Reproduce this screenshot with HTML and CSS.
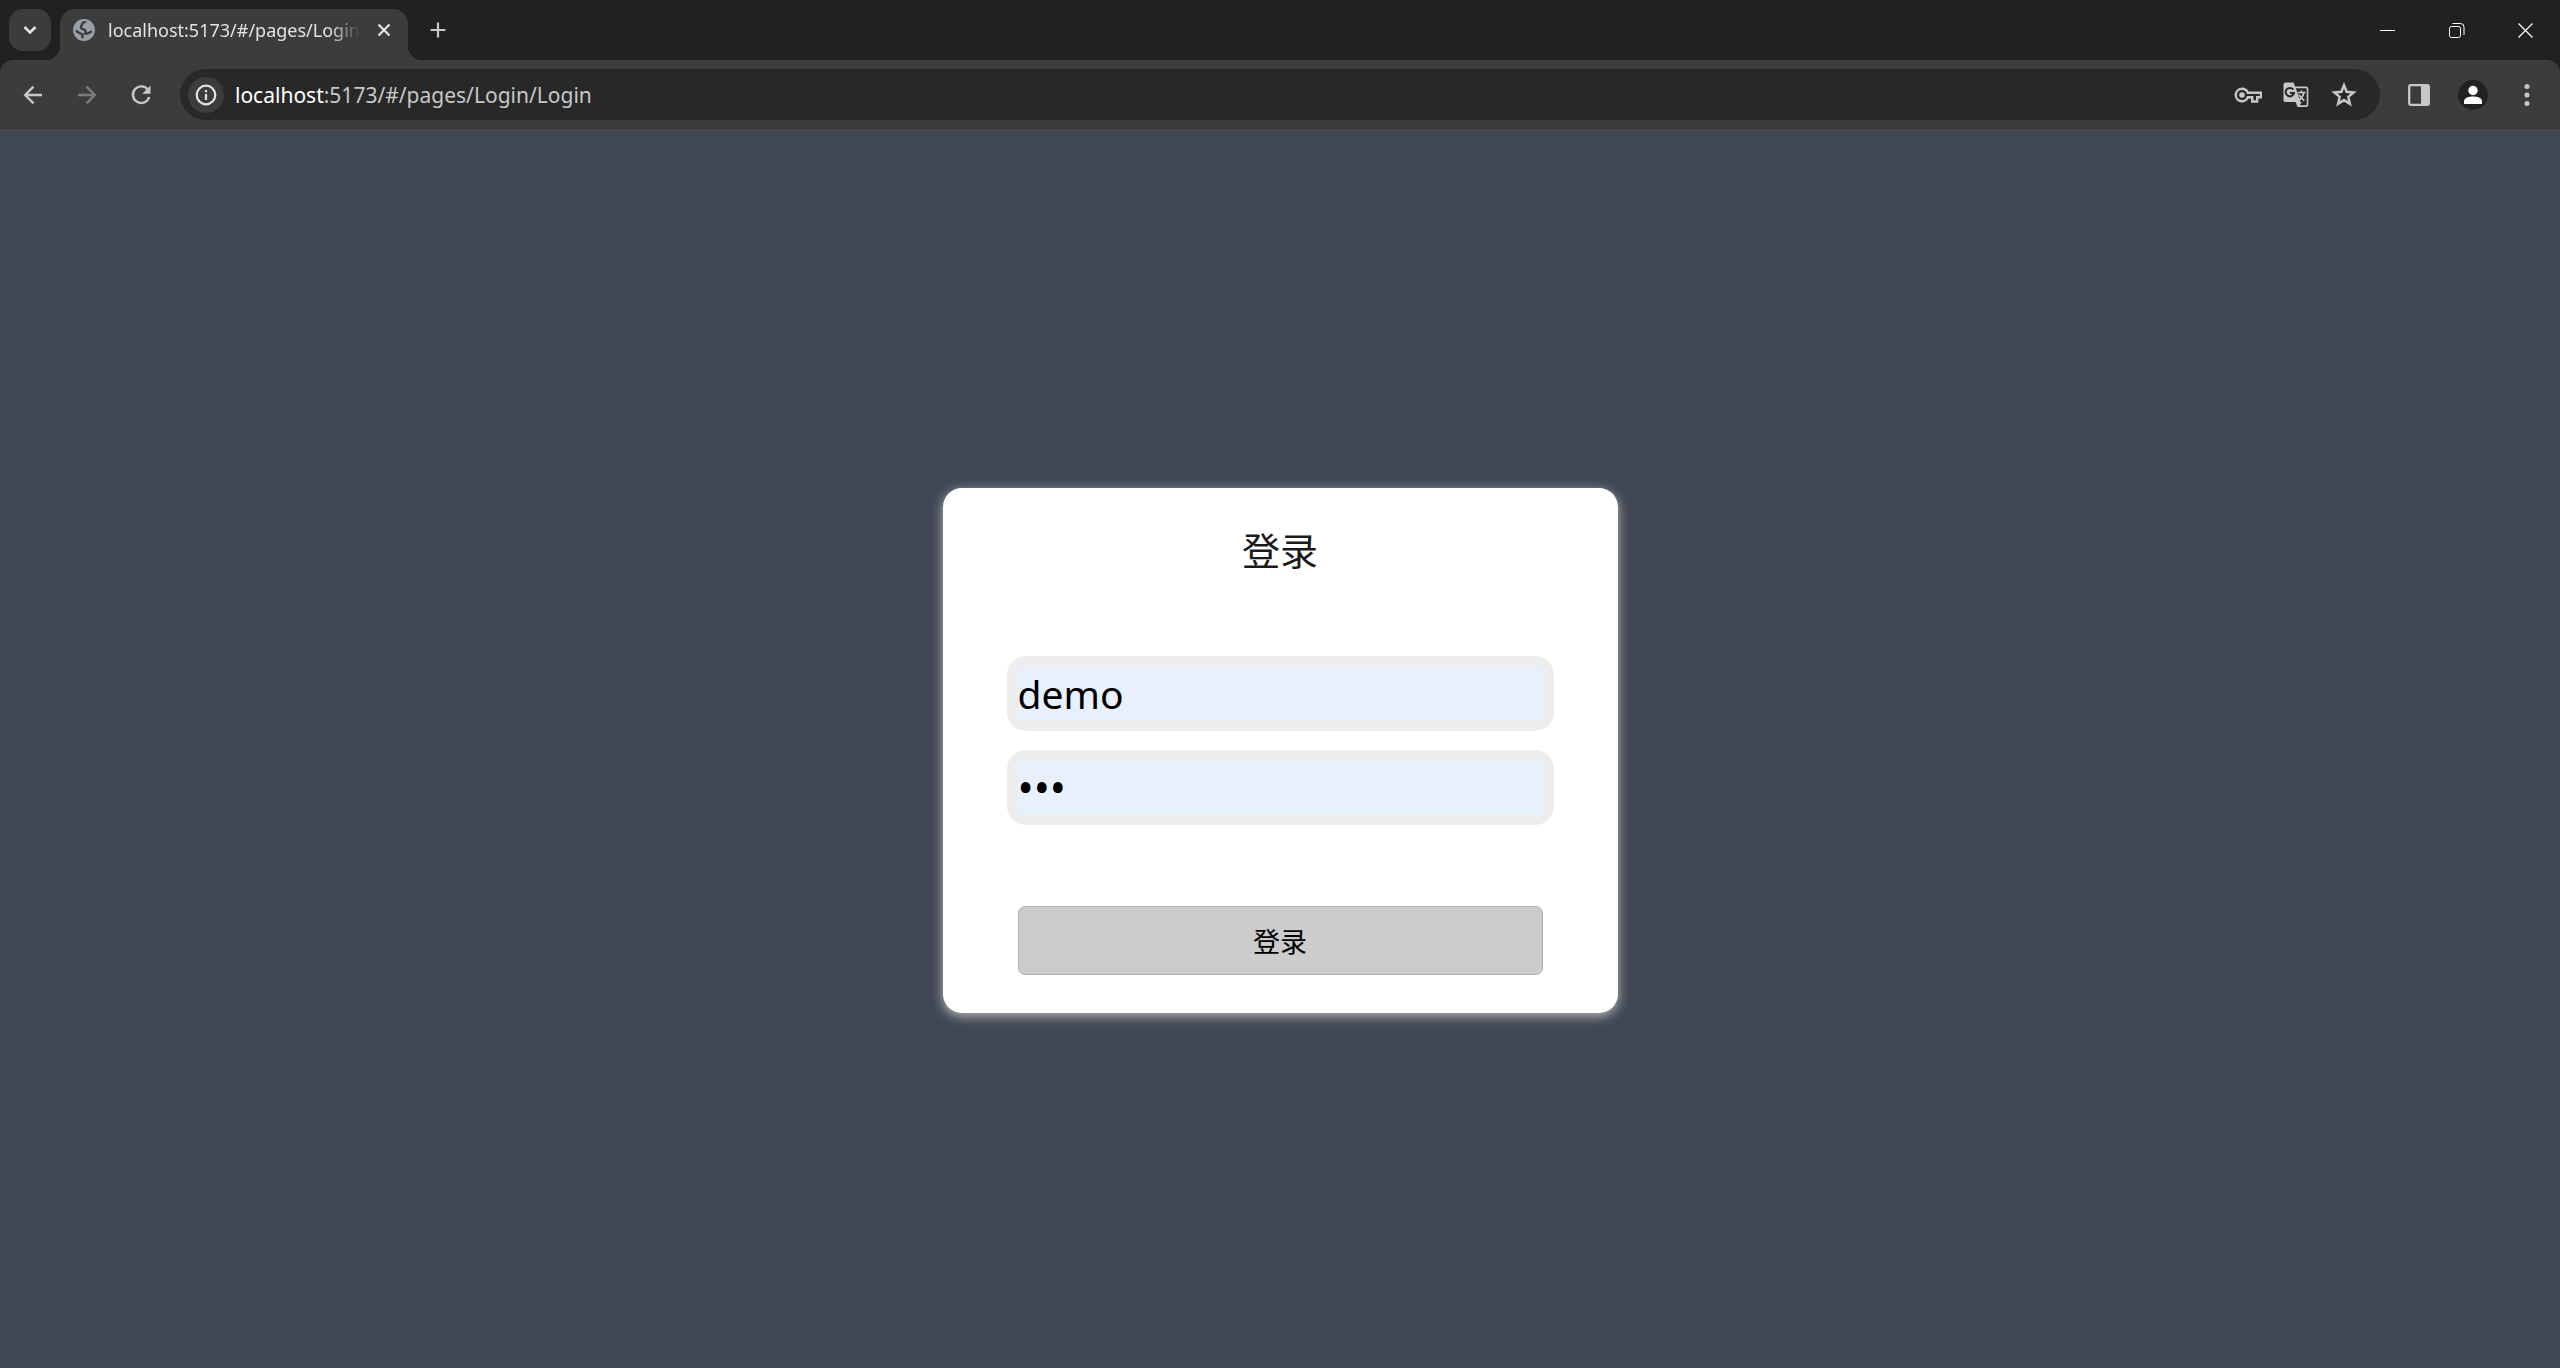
FILE: index.html
```html
<!DOCTYPE html>
<html lang="zh-CN">
<head>
  <meta charset="utf-8">
  <meta name="viewport" content="width=device-width, initial-scale=1">
  <title>登录</title>
  <link rel="stylesheet" href="styles.css">
</head>
<body>
  <header class="browser">
    <div class="tabstrip">
      <button class="tab-search" type="button" aria-label="Search tabs">
        <svg width="42" height="42" viewBox="0 0 42 42"><path d="M15.500 18l5.500 5.500 5.500-5.500" fill="none" stroke="currentColor" stroke-width="2.600"/></svg>
      </button>
      <div class="tab">
        <svg class="favicon" width="24" height="24" viewBox="0 0 24 24">
          <circle cx="12" cy="12" r="10" fill="#9aa0a8"/>
          <path d="M14.500 3.200C12 3.200 10.500 5 9.600 7.200C8.700 9.200 8.600 10.800 11 11.200C13.800 11.500 14 13.500 13.200 15.500C15.600 16.300 17.300 15 20 13.200M3.500 13.200C6 13 6.500 15.200 9 15.700C11.200 16.200 10.700 18.500 10.400 20.400" fill="none" stroke="#3c3c3c" stroke-width="2.400"/>
          <circle cx="12" cy="12" r="9.900" fill="none" stroke="#9aa0a8" stroke-width="2"/>
        </svg>
        <span class="tab-title">localhost:5173/#/pages/Login/Login</span>
        <button class="tab-close" type="button" aria-label="Close tab">
          <svg width="24" height="24" viewBox="0 0 24 24"><path d="M6.500 6.500l11 11M17.500 6.500l-11 11" stroke="currentColor" stroke-width="2.200"/></svg>
        </button>
      </div>
      <button class="new-tab" type="button" aria-label="New tab">
        <svg width="24" height="24" viewBox="0 0 24 24"><path d="M12 4.500v15M4.500 12h15" stroke="currentColor" stroke-width="2.200"/></svg>
      </button>
      <div class="window-controls">
        <button type="button" aria-label="Minimize"><svg width="17" height="17" viewBox="0 0 17 17"><path d="M1 8.500h15" stroke="currentColor"/></svg></button>
        <button type="button" aria-label="Restore"><svg width="17" height="17" viewBox="0 0 17 17"><rect x="1.500" y="4.500" width="11" height="11" rx="2" fill="none" stroke="currentColor"/><path d="M4.500 1.500h8a3.500 3.500 0 0 1 3.500 3.500v8" fill="none" stroke="currentColor"/></svg></button>
        <button type="button" aria-label="Close"><svg width="17" height="17" viewBox="0 0 17 17"><path d="M1.500 1.500l14 14M15.500 1.500l-14 14" stroke="currentColor" stroke-width="1.200"/></svg></button>
      </div>
    </div>
    <nav class="toolbar" aria-label="Navigation">
      <div class="nav-buttons">
        <button type="button" aria-label="Back"><svg width="24" height="24" viewBox="0 0 24 24"><path d="M21 12H4.500M12.500 3.700L4.200 12l8.300 8.300" fill="none" stroke="currentColor" stroke-width="2.400"/></svg></button>
        <button type="button" aria-label="Forward" disabled><svg width="24" height="24" viewBox="0 0 24 24"><path d="M3 12h16.500M11.500 3.700l8.300 8.300-8.300 8.300" fill="none" stroke="currentColor" stroke-width="2.400"/></svg></button>
        <button type="button" aria-label="Reload"><svg width="24" height="24" viewBox="0 0 24 24"><path d="M19.300 7.300A8.300 8.300 0 1 0 20.200 14" fill="none" stroke="currentColor" stroke-width="2.400"/><path d="M21.500 2.500v8.200h-8.200z" fill="currentColor"/></svg></button>
      </div>
      <div class="omnibox">
        <button class="site-info" type="button" aria-label="View site information"><svg width="24" height="24" viewBox="0 0 24 24"><circle cx="12" cy="12" r="9.300" fill="none" stroke="currentColor" stroke-width="2.200"/><path d="M12 11v6M12 7v2.200" stroke="currentColor" stroke-width="2.200"/></svg></button>
        <div class="url"><span class="host">localhost</span>:5173/#/pages/Login/Login</div>
        <div class="omnibox-actions">
          <button type="button" aria-label="Passwords"><svg width="28" height="24" viewBox="0 0 28 24"><path d="M8 5.800a6.200 6.200 0 1 0 5.800 8.400h4.400v4.300h5v-4.300h3.800v-4.500H13.800A6.200 6.200 0 0 0 8 5.800z" fill="none" stroke="currentColor" stroke-width="2.400"/><circle cx="8" cy="12" r="2.800" fill="currentColor"/></svg></button>
          <button type="button" aria-label="Translate this page"><svg width="26" height="26" viewBox="0 0 26 26"><path d="M2.500.5h8l1.600 4H23a2.300 2.300 0 0 1 2.300 2.300v16a2.300 2.300 0 0 1-2.300 2.300h-8.500l-1.800-5H2.500A2 2 0 0 1 .5 18V2.500a2 2 0 0 1 2-2z" fill="currentColor"/><path d="M12.800 6.200h10.100a.8.800 0 0 1 .8.800v15.500a.8.800 0 0 1-.8.800h-6.200l2.300-3.200-1.500-.2z" fill="#282828"/><path d="M10.300 7.700A4.200 4.200 0 1 0 11 11H7" fill="none" stroke="#282828" stroke-width="2"/><path d="M14.500 10.500h8M18.500 8.500v2M21 10.500c-.8 3.500-2.500 5.800-4.700 7.700M15.800 12.500c1.300 2.700 3.200 4.500 5.500 6.200" fill="none" stroke="currentColor" stroke-width="1.700"/></svg></button>
          <button type="button" aria-label="Bookmark this tab"><svg width="26" height="26" viewBox="0 0 26 26"><path d="M13 3.300l2.600 6.500 7 .6-5.300 4.500 1.600 6.900-5.900-3.700-5.900 3.700 1.600-6.900-5.300-4.500 7-.6z" fill="none" stroke="currentColor" stroke-width="2.500"/></svg></button>
        </div>
      </div>
      <div class="browser-actions">
        <button type="button" aria-label="Side panel"><svg width="24" height="24" viewBox="0 0 24 24"><rect x="2.200" y="2.200" width="19.600" height="19.600" rx="1.500" fill="none" stroke="currentColor" stroke-width="2.300"/><path d="M14 2h8v20h-8z" fill="currentColor"/></svg></button>
        <button type="button" aria-label="Profile"><svg width="30" height="30" viewBox="0 0 30 30"><circle cx="15" cy="15" r="15" fill="#202221"/><circle cx="15" cy="10.500" r="4.700" fill="#fff"/><path d="M6 24v-2.500c0-4 5-5 9-5s9 1 9 5V24z" fill="#fff"/></svg></button>
        <button type="button" aria-label="Menu"><svg width="24" height="24" viewBox="0 0 24 24" fill="currentColor"><circle cx="12" cy="3.500" r="2.500"/><circle cx="12" cy="12" r="2.500"/><circle cx="12" cy="20.500" r="2.500"/></svg></button>
      </div>
    </nav>
  </header>
  <main class="page">
    <form class="login-card">
      <h1 class="login-title">登录</h1>
      <div class="fields">
        <div class="field"><input type="text" aria-label="用户名" value="demo"></div>
        <div class="field"><input class="password" type="password" aria-label="密码" value="123"></div>
      </div>
      <button class="submit" type="button">登录</button>
    </form>
  </main>
</body>
</html>
```
FILE: styles.css
```css
* {
  box-sizing: border-box;
}

body {
  margin: 0;
  min-height: 100vh;
  display: flex;
  flex-direction: column;
  background: #404754;
  font-family: "Noto Sans", "Noto Sans CJK SC", sans-serif;
}

button {
  display: flex;
  align-items: center;
  justify-content: center;
  padding: 0;
  border: 0;
  background: none;
  color: #c7c7c7;
  font: inherit;
}

svg {
  display: block;
  flex: none;
}

/* Browser window */
.browser {
  background: #202221;
}

.tabstrip {
  display: flex;
  height: 60px;
  padding: 9px 0 0 9px;
}

.tab-search {
  width: 42px;
  height: 42px;
  margin-right: 9px;
  border-radius: 14px;
  background: #3c3c3c;
  color: #e3e3e3;
}

.tab {
  position: relative;
  display: flex;
  align-items: center;
  gap: 12px;
  width: 348px;
  padding: 0 12px 9px;
  border-radius: 15px 15px 0 0;
  background: #3c3c3c;
  color: #e3e3e3;
}

/* Flared feet that join the tab to the toolbar */
.tab::before,
.tab::after {
  content: "";
  position: absolute;
  bottom: 0;
  width: 15px;
  height: 15px;
}

.tab::before {
  right: 100%;
  background: radial-gradient(circle at 0 0, transparent 15px, #3c3c3c 16px);
}

.tab::after {
  left: 100%;
  background: radial-gradient(circle at 100% 0, transparent 15px, #3c3c3c 16px);
}

.tab-title {
  flex: 1;
  overflow: hidden;
  font-size: 18px;
  line-height: 24px;
  white-space: nowrap;
  mask-image: linear-gradient(to right, #000 calc(100% - 30px), transparent);
}

.tab-close {
  color: #e3e3e3;
}

.new-tab {
  width: 42px;
  height: 42px;
  margin-left: 9px;
}

.window-controls {
  display: flex;
  height: 42px;
  margin-left: auto;
}

.window-controls button {
  width: 69px;
  color: #fff;
}

.toolbar {
  display: flex;
  align-items: center;
  height: 71px;
  padding: 0 6px;
  border-bottom: 2px solid #474747;
  border-radius: 13px 13px 0 0;
  background: #3c3c3c;
}

.nav-buttons {
  display: flex;
}

.nav-buttons button {
  width: 54px;
  height: 51px;
}

.nav-buttons button:disabled {
  color: #7c7c7c;
}

.omnibox {
  flex: 1;
  display: flex;
  align-items: center;
  height: 51px;
  margin-left: 12px;
  padding: 0 12px 0 8px;
  border-radius: 26px;
  background: #282828;
}

.site-info {
  width: 36px;
  height: 36px;
  border-radius: 50%;
  background: #3c3c3c;
  color: #e3e3e3;
}

.url {
  flex: 1;
  padding-left: 11px;
  color: #c7c7c7;
  font-size: 21px;
  line-height: 30px;
}

.host {
  color: #fff;
}

.omnibox-actions {
  display: flex;
}

.omnibox-actions button {
  width: 48px;
  height: 48px;
}

.browser-actions {
  display: flex;
  margin-left: 12px;
}

.browser-actions button {
  width: 54px;
  height: 51px;
}

/* Login page */
.page {
  flex: 1;
  display: grid;
  place-items: center;
  padding: 2px 0 0;
}

.login-card {
  width: 100%;
  max-width: 675px;
  padding: 34px 64px 38px;
  border-radius: 19px;
  background: #fff;
  box-shadow: 0 3px 12px #bbb;
}

.login-title {
  margin: 0 0 78px;
  color: #1a1a1a;
  font-size: 38px;
  font-weight: 400;
  line-height: 56px;
  text-align: center;
}

.fields {
  display: grid;
  gap: 19px;
  margin-bottom: 81px;
}

.field {
  padding: 11px;
  border-radius: 19px;
  background: #ededed;
}

.field input {
  display: block;
  width: 100%;
  height: 53px;
  padding: 0;
  border: 0;
  border-radius: 2px;
  background: #e8f0fe;
  color: #000;
  font: inherit;
  font-size: 39px;
}

.field .password {
  font-size: 43px;
}

.submit {
  width: calc(100% - 22px);
  height: 69px;
  margin: 0 auto;
  border: 1px solid #b3b3b3;
  border-radius: 7px;
  background: #ccc;
  color: #000;
  font-size: 27px;
}
```
